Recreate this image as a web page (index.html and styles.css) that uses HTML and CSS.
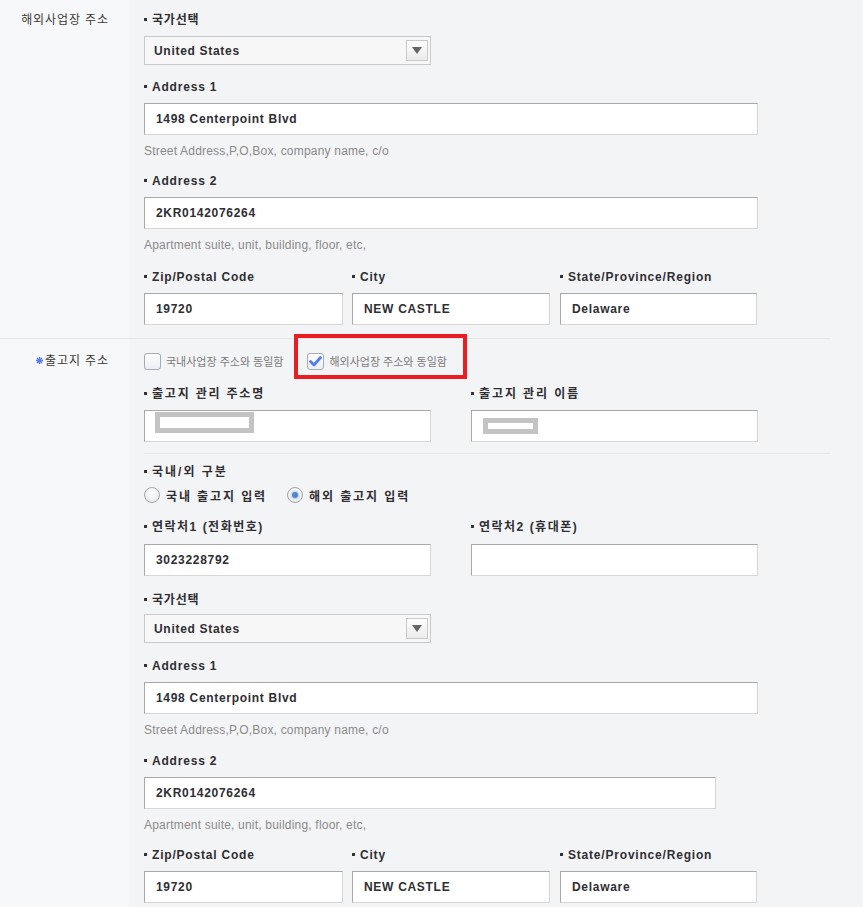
FILE: index.html
```html
<!DOCTYPE html>
<html lang="ko">
<head>
<meta charset="utf-8">
<title>출고지 주소</title>
<link rel="stylesheet" href="styles.css">
</head>
<body>
<div class="form">
  <div class="row sec1">
    <div class="rlabel">해외사업장 주소</div>
    <div class="rbody">
      <div class="g">
        <div class="lbl">국가선택</div>
        <div class="sel"><span>United States</span><span class="sel-btn"><svg width="10" height="7" viewBox="0 0 10 7"><polygon points="0,0 10,0 5,7" fill="#666"/></svg></span></div>
      </div>
      <div class="g gap15">
        <div class="lbl">Address 1</div>
        <div class="inp">1498 Centerpoint Blvd</div>
        <div class="hint">Street Address,P,O,Box, company name, c/o</div>
      </div>
      <div class="g gap15">
        <div class="lbl">Address 2</div>
        <div class="inp">2KR0142076264</div>
        <div class="hint">Apartment suite, unit, building, floor, etc,</div>
      </div>
      <div class="g cols3 gap17">
        <div class="col"><div class="lbl">Zip/Postal Code</div><div class="inp">19720</div></div>
        <div class="col"><div class="lbl">City</div><div class="inp">NEW CASTLE</div></div>
        <div class="col"><div class="lbl">State/Province/Region</div><div class="inp">Delaware</div></div>
      </div>
    </div>
  </div>

  <div class="row sec2">
    <div class="rlabel"><svg class="req" width="7" height="7" viewBox="0 0 7 7"><g stroke="#5b7fe8" stroke-width="1.6"><line x1="3.5" y1="0" x2="3.5" y2="7"/><line x1="0" y1="3.5" x2="7" y2="3.5"/><line x1="1" y1="1" x2="6" y2="6"/><line x1="6" y1="1" x2="1" y2="6"/></g></svg>출고지 주소</div>
    <div class="rbody">
      <div class="checks">
        <label class="chk"><span class="box"></span><span class="chk-text">국내사업장 주소와 동일함</span></label>
        <label class="chk chk-marked"><span class="box"><svg width="15" height="15" viewBox="0 0 15 15"><path d="M2.5 7.5 L6 11 L12.5 3.5" fill="none" stroke="#4d7ef2" stroke-width="2.8" stroke-linecap="round" stroke-linejoin="round"/></svg></span><span class="chk-text">해외사업장 주소와 동일함</span><span class="annot"></span></label>
      </div>

      <div class="g cols2 gap17 divided">
        <div class="col"><div class="lbl sp18">출고지 관리 주소명</div><div class="inp"><span class="redact wide"></span></div></div>
        <div class="col"><div class="lbl sp19">출고지 관리 이름</div><div class="inp"><span class="redact short"></span></div></div>
      </div>

      <div class="g gap11">
        <div class="lbl lbl-tight sp20">국내/외 구분</div>
        <div class="radios">
          <label class="rad"><span class="dot"></span><span class="sp19">국내 출고지 입력</span></label>
          <label class="rad rad-on"><span class="dot"></span><span class="sp19">해외 출고지 입력</span></label>
        </div>
      </div>

      <div class="g cols2 gap17">
        <div class="col"><div class="lbl lbl-loose sp15">연락처1 (전화번호)</div><div class="inp">3023228792</div></div>
        <div class="col"><div class="lbl lbl-loose sp15">연락처2 (휴대폰)</div><div class="inp"></div></div>
      </div>

      <div class="g gap17">
        <div class="lbl lbl-sel">국가선택</div>
        <div class="sel"><span>United States</span><span class="sel-btn"><svg width="10" height="7" viewBox="0 0 10 7"><polygon points="0,0 10,0 5,7" fill="#666"/></svg></span></div>
      </div>
      <div class="g gap16">
        <div class="lbl">Address 1</div>
        <div class="inp">1498 Centerpoint Blvd</div>
        <div class="hint">Street Address,P,O,Box, company name, c/o</div>
      </div>
      <div class="g gap16">
        <div class="lbl">Address 2</div>
        <div class="inp narrow">2KR0142076264</div>
        <div class="hint">Apartment suite, unit, building, floor, etc,</div>
      </div>
      <div class="g cols3 gap15">
        <div class="col"><div class="lbl">Zip/Postal Code</div><div class="inp">19720</div></div>
        <div class="col"><div class="lbl">City</div><div class="inp">NEW CASTLE</div></div>
        <div class="col"><div class="lbl">State/Province/Region</div><div class="inp">Delaware</div></div>
      </div>
    </div>
  </div>
</div>
</body>
</html>
```

FILE: styles.css
```css
* { box-sizing: border-box; }
html, body { margin: 0; padding: 0; }
body {
  background: #f3f4f6;
  font-family: "Liberation Sans", "Noto Sans CJK KR", sans-serif;
  color: #333;
  font-size: 12px;
}
.form { width: 830px; }
.row { display: flex; }
.sec2 { border-top: 1px solid #e4e6e9; }
.rlabel {
  width: 130px;
  flex: none;
  background: #f7f8f9;
  text-align: right;
  padding-right: 21px;
  font-size: 12px;
  line-height: 14px;
  letter-spacing: 0.9px;
  color: #3a3a3a;
}
.sec1 .rlabel { padding-top: 13px; }
.sec2 .rlabel { padding-top: 15px; }
.req { vertical-align: 1px; margin-right: 2px; }
.rbody { flex: 1; padding-left: 14px; }
.sec1 .rbody { padding-top: 13px; padding-bottom: 13px; }
.sec2 .rbody { padding-top: 14px; padding-bottom: 20px; }

.gap11 { margin-top: 11px; }
.gap15 { margin-top: 15px; }
.gap16 { margin-top: 16px; }
.gap17 { margin-top: 17px; }

.lbl {
  display: flex;
  align-items: center;
  font-weight: bold;
  font-size: 12px;
  line-height: 14px;
  letter-spacing: 0.8px;
  color: #2e2e33;
  margin-bottom: 9px;
  white-space: nowrap;
}
.lbl::before {
  content: "";
  width: 3px;
  height: 3px;
  background: #333;
  margin-right: 5px;
  flex: none;
  position: relative;
  top: -1px;
}
.lbl-tight { margin-bottom: 0; }
.lbl-loose { margin-bottom: 10px; }
.lbl-sel { margin-bottom: 7px; }
.sp15 { letter-spacing: 1.5px; }
.sp18 { letter-spacing: 1.8px; }
.sp19 { letter-spacing: 1.9px; }
.sp20 { letter-spacing: 2px; }

.sel {
  width: 287px;
  height: 29px;
  border: 1px solid #c8c9cb;
  background: #f7f7f7;
  display: flex;
  align-items: center;
  justify-content: space-between;
  padding: 0 2px 0 9px;
  font-weight: bold;
  letter-spacing: 0.7px;
  color: #2e2e33;
}
.sel-btn {
  width: 22px;
  height: 21px;
  border: 1px solid #c9c9c9;
  background: linear-gradient(#fdfdfd, #ebebeb);
  display: flex;
  align-items: center;
  justify-content: center;
}

.inp {
  width: 614px;
  height: 32px;
  background: #fff;
  border: 1px solid;
  border-color: #a9a9a9 #d6d6d6 #d6d6d6 #a9a9a9;
  display: flex;
  align-items: center;
  padding-left: 11px;
  font-weight: bold;
  letter-spacing: 0.7px;
  color: #2e2e33;
  white-space: nowrap;
}
.inp.narrow { width: 572px; }
.hint {
  margin-top: 8px;
  line-height: 16px;
  font-size: 12px;
  letter-spacing: 0.2px;
  color: #8a8a8a;
}

.cols3 { display: grid; grid-template-columns: 199px 198px 198px; column-gap: 9px; width: 614px; }
.cols3 .col:last-child { margin-left: 1px; }
.cols3 .inp { width: 100%; }
.cols2 { display: grid; grid-template-columns: 287px 287px; column-gap: 40px; }
.cols2 .inp { width: 100%; }
.divided { padding-bottom: 11px; border-bottom: 1px solid #e6e7ea; }

.redact {
  display: block;
  border: 5px solid #c3c3c3;
  background: #fff;
}
.redact.wide { width: 99px; height: 21px; margin-left: -1px; margin-top: -8px; }
.redact.short { width: 55px; height: 16px; margin-left: 0px; }

.checks { display: flex; align-items: center; height: 17px; }
.chk { display: flex; align-items: center; position: relative; }
.chk + .chk { margin-left: 24px; }
.box {
  width: 17px;
  height: 17px;
  border: 1px solid #a7acb4;
  border-radius: 3px;
  background: linear-gradient(#fefefe, #eceef2);
  display: flex;
  align-items: center;
  justify-content: center;
  margin-right: 5px;
  flex: none;
}
.chk-text {
  font-size: 11px;
  letter-spacing: 0;
  line-height: 14px;
  color: #7a7a7a;
  white-space: nowrap;
}
.annot {
  position: absolute;
  left: -13px;
  top: -19px;
  width: 173px;
  height: 45px;
  border: 4px solid #ec1c24;
}

.radios { display: flex; align-items: center; height: 16px; margin-top: 8px; }
.rad {
  display: flex;
  align-items: center;
  font-weight: bold;
  font-size: 12px;
  color: #2e2e33;
  white-space: nowrap;
}
.rad + .rad { margin-left: 20px; }
.dot {
  width: 16px;
  height: 16px;
  border-radius: 50%;
  border: 1px solid #a4a6aa;
  background: radial-gradient(circle at 50% 35%, #ffffff, #e3e4e6);
  margin-right: 6px;
  flex: none;
  display: flex;
  align-items: center;
  justify-content: center;
}
.rad-on .dot::after {
  content: "";
  width: 6px;
  height: 6px;
  border-radius: 50%;
  background: #4f88c8;
  box-shadow: 0 0 0 1.5px #c9dbef;
}
```
